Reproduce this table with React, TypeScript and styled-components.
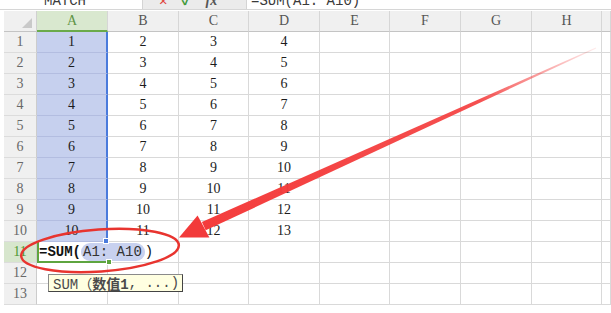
import styled, { createGlobalStyle } from 'styled-components';

const GlobalStyle = createGlobalStyle`
  html, body {
    margin: 0;
    padding: 0;
    background: #fff;
  }
  body {
    font-family: 'Liberation Serif', 'Noto Sans CJK SC', serif;
  }
`;

const Page = styled.div`
  position: relative;
  width: 611px;
  height: 313px;
  overflow: hidden;
  display: flex;
  flex-direction: column;
  gap: 1px;
`;

// formula bar, scrolled so only its lower edge shows
const FormulaBar = styled.div`
  height: 9px;
  flex: none;
  display: flex;
  align-items: flex-end;
  overflow: hidden;
  border-bottom: 1px solid #d6d6d6;
  font-family: 'Liberation Mono', 'Noto Sans CJK SC', monospace;
  font-size: 14px;
  line-height: 16px;
  color: #3a3a3a;
`;

const NameBox = styled.div`
  width: 142px;
  flex: none;
  padding-right: 12px;
  box-sizing: border-box;
  text-align: center;
`;

const ToolBox = styled.div`
  width: 105px;
  height: 100%;
  flex: none;
  display: flex;
  align-items: flex-end;
  gap: 14px;
  padding-left: 16px;
  box-sizing: border-box;
  background: #ebebeb;
  border-left: 1px solid #d4d4d4;
  border-right: 1px solid #d4d4d4;
`;

const ToolIcon = styled.span<{ $color: string; $italic?: boolean }>`
  color: ${(p) => p.$color};
  font-family: ${(p) => (p.$italic ? "'Liberation Serif', serif" : 'inherit')};
  font-style: ${(p) => (p.$italic ? 'italic' : 'normal')};
  font-weight: bold;
`;

const FormulaText = styled.div`
  padding-left: 4px;
  white-space: pre;
`;

const Sheet = styled.div`
  display: grid;
  grid-template-columns: 33px 71px 71px 70px 71px 70px 71px 71px 70px 1fr;
  grid-auto-rows: 21px;
  margin-left: 4px;
  font-size: 14px;
`;

const CornerCell = styled.div`
  position: relative;
  background: #f0f0f0;
  border-right: 1px solid #d0d0d0;
  border-bottom: 1px solid #c4c4c4;
  box-sizing: border-box;

  &::after {
    content: '';
    position: absolute;
    right: 4px;
    bottom: 3px;
    border-left: 10px solid transparent;
    border-bottom: 10px solid #c9c9c9;
  }
`;

const ColHeader = styled.div<{ $active?: boolean }>`
  display: flex;
  align-items: center;
  justify-content: center;
  box-sizing: border-box;
  background: ${(p) => (p.$active ? '#d9e8cf' : '#f0f0f0')};
  color: ${(p) => (p.$active ? '#5f9446' : '#555')};
  border-right: 1px solid #d6d6d6;
  border-bottom: ${(p) => (p.$active ? '2px solid #6aaa4a' : '1px solid #c4c4c4')};
`;

const RowHeader = styled.div<{ $active?: boolean }>`
  display: flex;
  align-items: center;
  justify-content: center;
  box-sizing: border-box;
  background: ${(p) => (p.$active ? '#d7e6cd' : '#f0f0f0')};
  color: ${(p) => (p.$active ? '#4e9a33' : '#686868')};
  border-right: 1px solid #cccccc;
  border-bottom: 1px solid #dcdcdc;
`;

const Cell = styled.div<{ $selected?: boolean; $handle?: boolean }>`
  position: relative;
  display: flex;
  align-items: center;
  justify-content: center;
  box-sizing: border-box;
  color: #1c1c1c;
  background: ${(p) => (p.$selected ? '#c6d0ee' : '#fff')};
  border-right: ${(p) => (p.$selected ? '2px solid #4a7bdc' : '1px solid #d9d9d9')};
  border-bottom: 1px solid ${(p) => (p.$selected ? '#b3bde0' : '#d9d9d9')};

  &::after {
    content: '';
    display: ${(p) => (p.$handle ? 'block' : 'none')};
    position: absolute;
    right: -3px;
    bottom: -3px;
    width: 4px;
    height: 4px;
    background: #4a7bdc;
    border: 1px solid #fff;
    z-index: 2;
  }
`;

const ActiveCell = styled.div`
  position: relative;
  display: flex;
  align-items: center;
  box-sizing: border-box;
  border-left: 2px solid #5ea53f;
  border-bottom: 2px solid #5ea53f;
  white-space: nowrap;
  z-index: 1;

  &::after {
    content: '';
    position: absolute;
    left: 67px;
    bottom: -4px;
    width: 4px;
    height: 4px;
    background: #5ea53f;
    border: 1px solid #fff;
  }
`;

const Formula = styled.div`
  display: flex;
  align-items: center;
  font-family: 'Liberation Mono', 'Noto Sans CJK SC', monospace;
  font-size: 14px;
  color: #111;
  background: #fff;
  padding-right: 1px;
  white-space: pre;
`;

const Bold = styled.span`
  font-weight: bold;
`;

const RangeRef = styled.span`
  background: #c8d1ef;
  color: #333;
  border-radius: 9px;
  padding: 0 3px 0 2px;
  line-height: 18px;
`;

const Tooltip = styled.div`
  position: absolute;
  left: 48px;
  top: 274px;
  height: 18px;
  display: flex;
  align-items: center;
  padding: 0 3px 0 4px;
  box-sizing: border-box;
  background: #ffffe1;
  border: 1px solid #8a8a8a;
  border-right-color: #444;
  border-bottom-color: #444;
  font-family: 'Liberation Mono', 'Noto Sans CJK SC', monospace;
  font-size: 14px;
  color: #4a4a4a;
  white-space: pre;
`;

const Overlay = styled.svg`
  position: absolute;
  left: 0;
  top: 0;
  width: 611px;
  height: 313px;
  pointer-events: none;
  z-index: 5;
`;

const columns = ['A', 'B', 'C', 'D', 'E', 'F', 'G', 'H', ''];

const App = () => {
  const rows = Array.from({ length: 13 }, (_, i) => i + 1);

  return (
    <Page>
      <GlobalStyle />
      <FormulaBar>
        <NameBox>MATCH</NameBox>
        <ToolBox>
          <ToolIcon $color="#e0463e">✕</ToolIcon>
          <ToolIcon $color="#3f9a3a">✓</ToolIcon>
          <ToolIcon $color="#555" $italic>
            fx
          </ToolIcon>
        </ToolBox>
        <FormulaText>=SUM(A1: A10)</FormulaText>
      </FormulaBar>

      <Sheet>
        <CornerCell />
        {columns.map((c, i) => (
          <ColHeader key={'h' + i} $active={c === 'A'}>
            {c}
          </ColHeader>
        ))}

        {rows.map((r) => [
          <RowHeader key={'r' + r} $active={r === 11}>
            {r}
          </RowHeader>,
          ...columns.map((_, ci) => {
            if (r === 11 && ci === 0) {
              return (
                <ActiveCell key={r + '-' + ci}>
                  <Formula>
                    <Bold>=SUM(</Bold>
                    <RangeRef>A1: A10</RangeRef>
                    <span>)</span>
                  </Formula>
                </ActiveCell>
              );
            }
            const value = r <= 10 && ci < 4 ? r + ci : '';
            return (
              <Cell
                key={r + '-' + ci}
                $selected={ci === 0 && r <= 10}
                $handle={ci === 0 && r === 10}
              >
                {value}
              </Cell>
            );
          }),
        ])}
      </Sheet>

      <Tooltip>
        SUM（<Bold>数值1</Bold>, ...)
      </Tooltip>

      <Overlay viewBox="0 0 611 313">
        <defs>
          <linearGradient
            id="arrowTail"
            gradientUnits="userSpaceOnUse"
            x1="596"
            y1="48"
            x2="204"
            y2="226"
          >
            <stop offset="0" stopColor="#f43c3c" stopOpacity="0.1" />
            <stop offset="0.3" stopColor="#f43c3c" stopOpacity="0.9" />
            <stop offset="1" stopColor="#f43c3c" />
          </linearGradient>
        </defs>
        <polygon
          points="596.2,48.5 595.8,47.5 201.9,222.1 205.7,230.3"
          fill="url(#arrowTail)"
        />
        <polygon points="179,237.5 197.6,215.4 209.4,237.4" fill="#f23a3a" />
        <ellipse
          cx="100"
          cy="250.5"
          rx="79"
          ry="21"
          transform="rotate(-4 100 250.5)"
          fill="none"
          stroke="#e8342f"
          strokeWidth="2.5"
        />
      </Overlay>
    </Page>
  );
};

export default App;
